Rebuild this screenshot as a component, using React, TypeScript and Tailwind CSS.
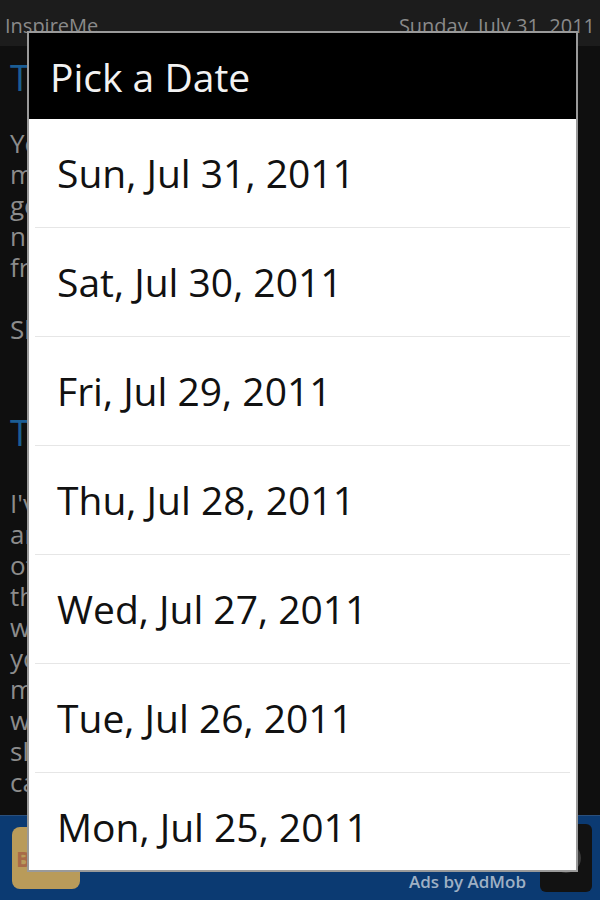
import React from 'react'

const dates = [
  'Sun, Jul 31, 2011',
  'Sat, Jul 30, 2011',
  'Fri, Jul 29, 2011',
  'Thu, Jul 28, 2011',
  'Wed, Jul 27, 2011',
  'Tue, Jul 26, 2011',
  'Mon, Jul 25, 2011',
]

const para1 = [
  'Yesterday is history, tomorrow is a',
  'mystery, but today is a gift. That is',
  'going to be the reason we call it the',
  'now, so enjoy each moment that comes',
  'from the heart of every single day.',
  '',
  'Share this with a friend',
]

const para2 = [
  "I've learned that people will forget",
  'and forgive most of what you said, and',
  'other things you did, but they will',
  'the way you made them feel in the end',
  'when you were with them, and what',
  'you gave them when they needed it',
  'most, so be kind to everyone you meet',
  'whatever the day brings and however',
  'slow or fast the hours go by, you',
  'can always choose to be kind.',
]

const App: React.FC = () => {
  return (
    <div className="relative w-[600px] h-[900px] overflow-hidden bg-[#0f0f0f] font-['Open_Sans',sans-serif]">
      {/* App header */}
      <div className="h-[46px] bg-[#1c1c1c] flex items-start justify-between px-[5px] pt-[12px] text-[20px] text-[#8a8a8a] leading-[28px]">
        <span>InspireMe</span>
        <span>Sunday, July 31, 2011</span>
      </div>

      {/* Page content behind dialog */}
      <div className="px-[10px] h-[769px] overflow-hidden whitespace-nowrap">
        <h2 className="text-[36px] leading-[44px] text-[#1b5d94] mt-[10px]">Today's Quote</h2>
        <div className="mt-[28px] text-[26px] leading-[31px] text-[#8c8c8c]">
          {para1.map((line, i) => (
            <p key={i} className="h-[31px]">{line}</p>
          ))}
        </div>
        <h2 className="text-[36px] leading-[44px] text-[#1b5d94] mt-[66px]">Today's Thought</h2>
        <div className="mt-[33px] text-[26px] leading-[31px] text-[#8c8c8c]">
          {para2.map((line, i) => (
            <p key={i} className="h-[31px]">{line}</p>
          ))}
        </div>
      </div>

      {/* Ad bar */}
      <div className="h-[85px] bg-[#0b3a72] border-t border-[#2a4f7c] flex items-center justify-between pl-[12px] pr-[8px]">
        <div className="w-[68px] h-[62px] rounded-[8px] bg-[#b99b5a] flex items-center pl-[4px]">
          <span className="text-[22px] font-bold text-[#a86a48]">B</span>
        </div>
        <div className="flex items-end gap-[14px] h-full pb-[8px]">
          <span className="text-[17px] font-semibold text-[#9fb0c4] leading-none mb-[2px]">Ads by AdMob</span>
          <div className="w-[52px] h-[68px] rounded-[6px] bg-[#121212] flex items-center justify-center">
            <div className="w-[30px] h-[30px] rounded-full border-[4px] border-[#3a3a3a]" />
          </div>
        </div>
      </div>

      {/* Dialog */}
      <div className="absolute left-[27px] top-[31px] w-[551px] h-[841px] border-[2px] border-[#9a9a9a] bg-black flex flex-col">
        <div className="h-[86px] shrink-0 bg-black flex items-center pl-[21px]">
          <span className="text-[39px] text-[#f2f2f2] leading-none">Pick a Date</span>
        </div>
        <div className="flex-1 bg-white overflow-hidden">
          {dates.map((d, i) => (
            <div key={d}>
              <div className="h-[108px] flex items-center pl-[28px] text-[39px] text-[#111111]">
                {d}
              </div>
              {i < dates.length - 1 && <div className="h-px mx-[6px] bg-[#e6e6e6]" />}
            </div>
          ))}
        </div>
      </div>
    </div>
  )
}

export default App
